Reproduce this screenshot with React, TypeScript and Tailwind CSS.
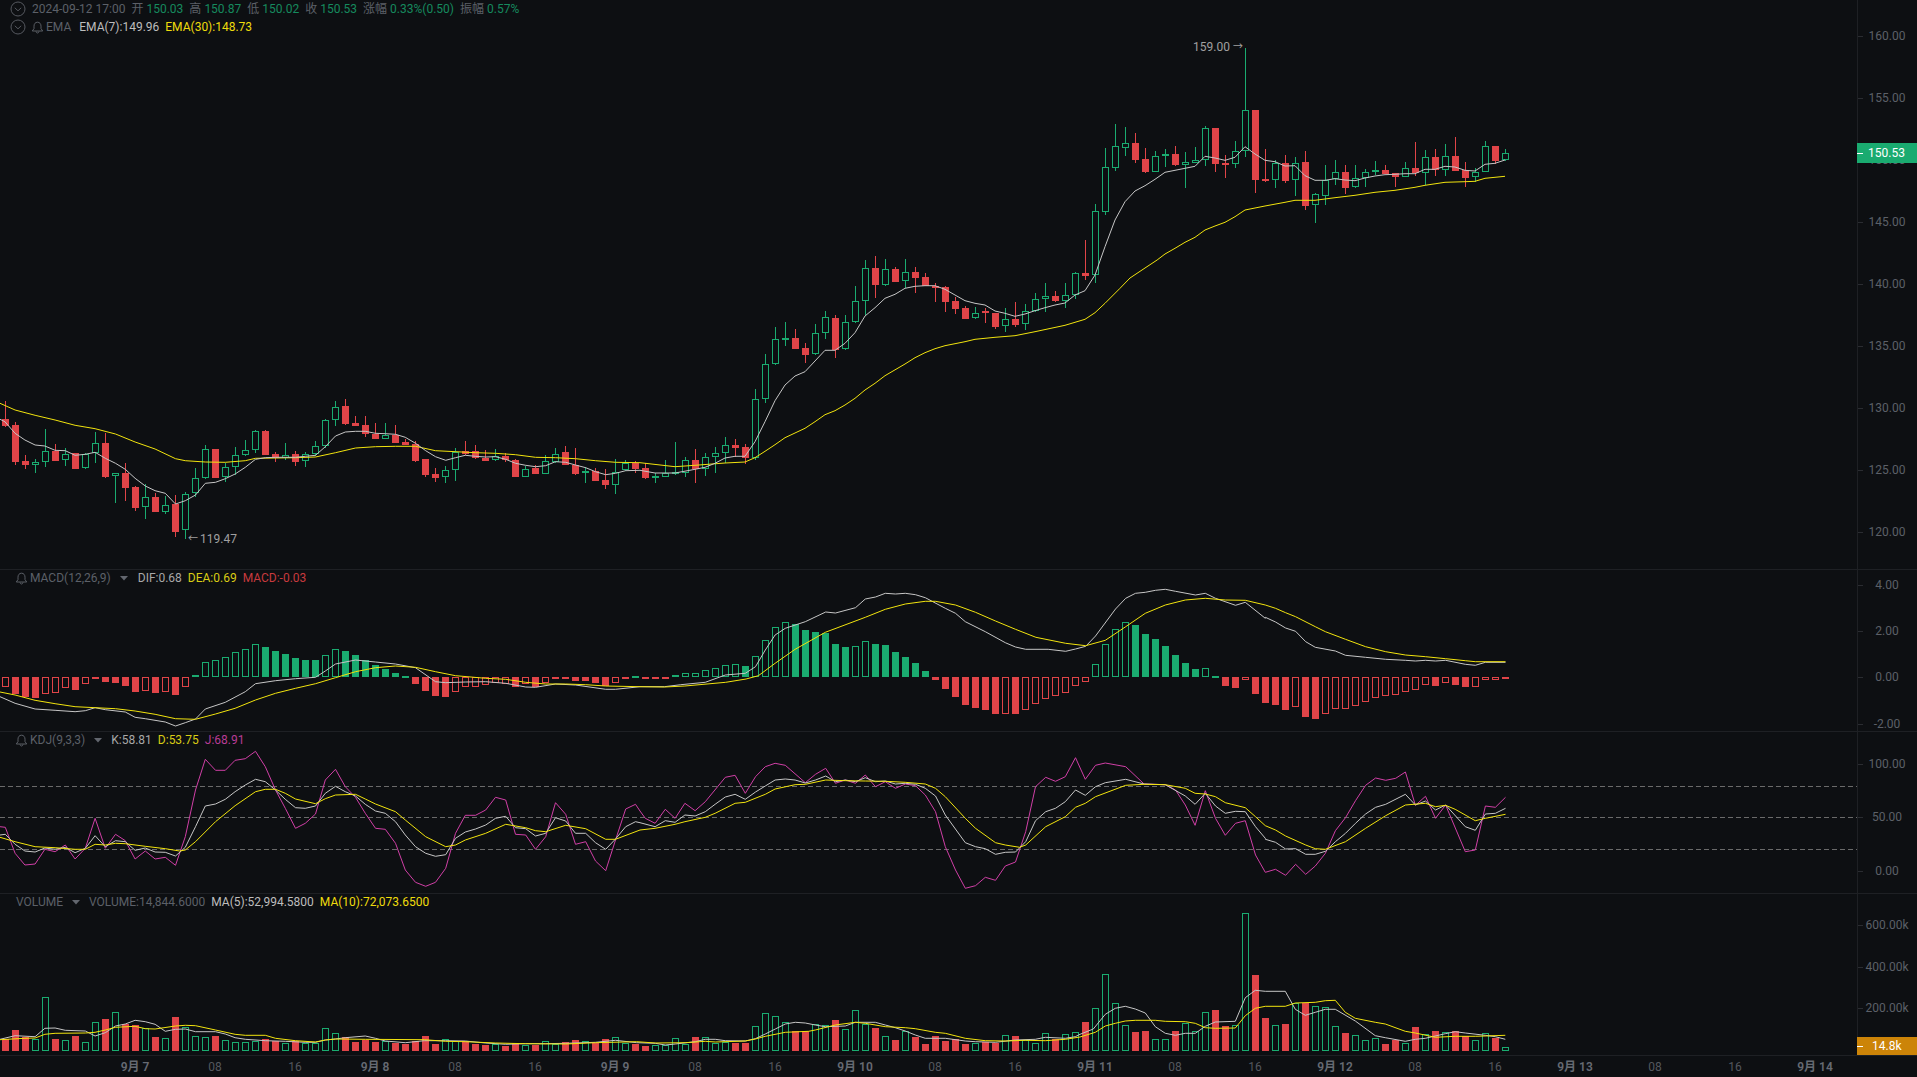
import React from "react";

const BG = "#0d0f12";
const GREEN = "#1aab70";
const RED = "#e04448";
const WHITE = "#c6c6c6";
const YELLOW = "#f2e40e";
const PINK = "#d03fa6";

type Pt = [number, number];
const L = (x0: number, sx: number, y0: number, a: number[]): Pt[] => {
  const r: Pt[] = [];
  for (let i = 0; i < a.length; i += 2) r.push([x0 + a[i] / sx, y0 + a[i + 1] / 3]);
  return r;
};
const join = (...segs: Pt[][]) => {
  const out: Pt[] = [];
  for (const s of segs) for (const p of s) if (!out.length || p[0] > out[out.length - 1][0]) out.push(p);
  return out.map((p) => `${p[0].toFixed(1)},${p[1].toFixed(1)}`).join(" ");
};

// [wickTop, bodyTop, bodyBottom, wickBottom, isGreen]
const c1 = [
  62,118,137,142,0, 125,135,245,255,0, 225,243,255,268,0, 238,247,254,278,1, 148,214,247,260,1, 192,212,242,243,0, 205,221,241,258,1, 218,220,266,267,0,
  220,222,265,266,1, 155,190,220,248,1, 160,190,290,293,0, 280,280,289,368,1, 250,279,323,362,0, 318,321,383,393,0, 312,352,382,418,1, 338,352,395,395,0,
  348,374,395,402,1, 345,372,455,470,0, 335,341,450,478,1, 265,295,340,350,1, 196,208,295,296,1, 207,208,293,293,0, 250,262,292,307,1, 200,224,262,285,1,
  181,211,224,228,1, 150,154,211,218,1, 150,154,224,225,0, 215,223,235,246,0, 190,224,233,240,1, 213,223,245,257,0, 215,221,244,260,1, 182,199,221,228,1,
  118,121,199,203,1, 64,80,121,138,1, 58,79,131,134,0, 107,129,137,138,0, 108,135,161,172,0, 128,161,176,177,0, 130,164,176,177,1, 136,164,189,190,0,
  178,186,194,196,0, 183,193,243,245,0, 236,237,285,290,0, 264,282,294,306,0, 257,271,292,308,1, 203,215,271,303,1, 183,212,222,225,0, 195,213,235,236,0,
  210,235,242,243,0, 208,229,241,243,1, 218,228,241,247,0, 238,241,290,290,0, 258,266,290,290,1, 256,265,281,281,0, 225,244,281,283,1, 205,221,246,248,1,
  198,217,254,255,0, 205,254,281,285,0, 262,272,280,308,1, 265,272,302,303,0, 268,301,316,326,0, 237,275,316,343,1, 240,248,271,272,1, 243,250,266,280,0,
];
const c2 = [
  668,685,713,718,0, 698,708,712,730,1, 660,700,711,712,1, 605,697,700,705,1, 652,661,700,712,1, 628,660,688,728,0, 640,652,688,708,1, 622,640,652,700,1,
  592,616,640,670,1, 598,615,623,650,0, 612,621,653,672,0, 447,478,655,660,1, 343,373,478,490,1, 262,298,373,375,1, 245,294,298,318,1, 267,294,326,328,0,
  310,324,344,368,0, 252,280,343,345,1, 212,232,280,298,1, 225,234,330,355,0, 225,247,328,330,1, 138,183,247,250,1, 60,85,184,225,1, 48,84,134,175,0,
  58,88,134,138,1, 82,87,125,126,0, 57,97,124,145,1, 80,96,113,160,0, 100,111,137,138,0, 128,137,143,185,0, 138,141,185,215,0, 172,183,206,222,0,
  198,204,236,238,0, 202,218,235,236,1, 205,213,218,248,0, 218,219,260,267,0, 205,238,259,277,1, 186,237,254,262,0, 193,212,253,270,1, 160,178,212,215,1,
  128,169,178,216,1, 152,169,182,186,0, 128,166,182,203,1, 97,100,166,178,1, 0,99,107,120,0, -108,-87,106,130,1,
];
const c3 = [
  385,442,575,586,1, 312,379,443,453,1, 322,370,383,408,1, 340,369,419,428,0, 385,417,455,458,0, 393,409,455,455,1, 388,402,407,440,1, 378,402,435,438,0,
  396,427,434,503,1, 380,421,428,430,1, 317,325,421,437,1, 325,324,431,455,0, 405,429,434,473,0, 362,394,433,445,1, 85,271,394,410,1, 270,270,480,518,0,
  387,477,483,487,0, 420,430,481,505,1, 405,429,483,490,0, 410,430,479,527,1, 393,426,557,571,0, 518,523,556,608,1, 436,479,527,555,1, 421,457,478,495,1,
  436,456,503,522,0, 435,475,502,505,1, 447,457,475,500,1, 423,451,457,465,1, 436,450,461,462,0, 458,460,470,500,0, 426,445,470,472,1, 367,444,459,467,0,
  390,412,460,495,1, 387,411,450,467,0, 373,408,449,467,1, 352,408,452,453,0, 427,450,473,500,0, 443,455,472,487,1, 364,379,455,455,1, 378,378,423,432,0,
  388,400,421,422,1,
];
type Candle = { wt: number; bt: number; bb: number; wb: number; g: boolean };
const candles: Candle[] = [];
const pushC = (a: number[], y0: number) => {
  for (let i = 0; i < a.length; i += 5)
    candles.push({ wt: Math.round(y0 + a[i] / 3), bt: Math.round(y0 + a[i + 1] / 3), bb: Math.round(y0 + a[i + 2] / 3), wb: Math.round(y0 + a[i + 3] / 3), g: a[i + 4] === 1 });
};
pushC(c1, 380);
pushC(c2, 240);
pushC(c3, 20);

const ema7 = join(
  L(0, 2.45, 380, [0,118,12,125,37,160,61,180,86,195,110,198,135,211,160,212,184,226,209,223,233,217,258,235,283,250,307,268,331,295,356,318,380,332,405,340,430,372,454,362,479,345,503,310,528,307,552,296,576,282,601,262,626,238,650,233,675,232,699,232,724,232,748,229,773,226,797,200,822,168,846,156,871,154,895,154,920,160,944,161,969,163,993,172,1018,190,1043,212,1067,230,1092,241,1116,233,1140,226,1165,229,1190,231,1214,230,1239,238,1263,250,1288,256,1312,260,1337,257,1361,245,1386,247,1410,255,1435,263,1459,275,1484,284,1508,280,1533,272,1568,271]),
  L(640, 3, 240, [0,690,45,699,105,699,165,688,195,682,225,670,255,654,285,649,315,649,345,605,375,545,405,482,435,435,465,408,495,395,525,363,555,331,585,331,615,310,645,278,675,228,705,203,735,175,765,163,795,145,825,139,855,137,885,137,915,148,945,165,975,182,1005,190,1035,195,1065,213,1095,220,1125,229,1155,222,1185,212,1215,203,1245,195,1275,189,1305,165,1335,152,1365,105]),
  L(1000, 2.8, 20, [294,680,322,600,350,545,378,513,406,497,434,478,462,457,490,451,518,445,546,439,574,409,602,414,630,421,658,412,686,380,714,402,742,421,770,425,798,438,826,437,854,467,882,481,910,481,938,476,966,480,994,482,1022,474,1050,468,1078,464,1106,463,1134,461,1162,461,1190,448,1218,448,1246,439,1274,441,1302,451,1330,453,1358,433,1386,430,1414,420])
);
const ema30 = join(
  L(0, 2.45, 380, [0,70,37,90,86,106,135,120,184,136,233,146,283,162,331,186,380,207,430,236,454,242,503,246,552,247,601,242,626,235,675,234,724,233,773,231,822,218,871,204,920,200,969,199,1018,199,1067,212,1116,215,1165,218,1214,220,1263,224,1312,232,1361,233,1410,236,1459,242,1508,247,1568,248]),
  L(640, 3, 240, [0,672,105,680,165,676,255,669,315,666,345,653,375,634,405,614,435,593,495,565,525,545,555,524,585,512,615,495,645,475,675,450,705,430,735,407,795,372,825,353,855,338,885,326,915,317,975,305,1005,298,1065,292,1125,287,1185,275,1275,256,1335,238,1365,218,1395,190,1440,145,1470,114,1515,84]),
  L(1000, 2.8, 20, [440,720,462,702,490,685,518,667,546,652,574,630,602,618,630,607,658,590,686,570,742,558,798,547,826,541,882,541,938,533,994,526,1050,517,1106,511,1162,502,1190,496,1246,487,1302,485,1330,484,1358,475,1414,469])
);

// negative = hollow bar
const hist = [
  -380,403,412,414,-403,-398,-385,390,-373,356,366,369,377,396,-392,399,-396,404,-380,346,-306,-300,-292,-277,-267,-253,261,273,282,294,300,300,-286,-268,273,285,300,315,326,339,347,372,393,408,411,-395,-382,-380,-376,-370,-372,380,-373,382,-370,356,356,362,362,370,378,-368,355,347,
  355,355,355,346,-340,-340,-331,-325,-316,-313,318,-287,-241,-202,-187,192,210,216,219,252,261,-259,-244,252,255,276,291,309,333,360,387,411,435,444,450,462,-461,462,-449,-431,-416,-407,-398,-377,-365,-313,-253,-208,-187,195,222,237,258,285,309,327,-325,348,378,384,-361,402,429,
  435,450,-442,470,477,-463,-448,-448,-437,-425,-413,-407,-404,-395,-391,-376,377,-368,375,381,-380,-361,-361,356,
];
const dif = join(
  L(0, 2.45, 560, [0,410,37,430,86,447,135,451,184,455,209,452,233,443,258,449,307,456,331,472,356,476,405,486,430,498,454,488,479,477,503,447,552,427,601,395,626,371,675,362,724,356,773,352,797,333,822,312,871,300,920,306,969,312,1018,323,1067,365,1092,368,1140,366,1190,365,1239,370,1288,381,1312,382,1361,372,1410,375,1484,388,1508,388,1568,380]),
  L(640, 2.45, 560, [0,380,60,380,100,374,160,367,209,345,258,340,283,320,307,270,331,225,356,205,405,185,455,156,479,159,528,143,552,117,577,111,601,100,626,102,650,100,675,104,699,113,748,145,773,160,797,185,846,215,895,248,920,261,945,268,1000,268,1043,274,1067,267,1092,259,1116,228,1165,147,1190,115,1214,100,1238,97,1263,91,1287,88,1312,94,1361,105,1385,100,1410,115,1459,136,1483,127,1532,175]),
  L(1260, 2.387, 560, [0,162,13,172,37,186,61,204,85,214,109,245,132,262,180,273,204,286,252,292,300,298,347,301,371,303,395,301,419,303,443,301,490,313,514,316,538,307,586,307])
);
const dea = join(
  L(0, 2.45, 560, [0,396,37,405,86,421,135,431,184,440,233,443,283,446,331,453,380,463,430,476,479,478,528,462,576,445,626,420,675,400,724,385,773,371,822,353,871,335,920,323,969,318,1018,322,1067,335,1116,347,1190,355,1239,358,1288,367,1337,372,1386,372,1435,374,1484,378,1568,380]),
  L(640, 2.45, 560, [0,381,60,381,110,378,210,367,260,357,290,347,331,310,380,268,454,217,552,172,601,148,650,132,699,124,724,124,773,135,822,157,871,183,920,208,970,232,1043,250,1092,257,1140,241,1190,200,1238,160,1287,135,1336,120,1385,115,1434,120,1483,121,1532,135]),
  L(1260, 2.387, 560, [0,130,37,145,61,158,85,170,132,200,156,215,204,238,252,260,300,275,347,285,395,290,443,296,490,302,514,305,586,305])
);
const kK = join(
  L(0, 2.45, 560, [0,825,13,823,37,853,61,873,86,876,110,864,135,868,160,862,184,878,209,865,233,827,258,860,283,842,307,845,331,871,356,864,380,876,405,877,430,888,454,862,479,800,503,738,528,732,552,718,576,695,601,675,626,658,650,665,675,690,699,718,724,743,748,745,773,738,797,700,822,679,846,695,871,708,895,733,920,753,944,760,969,785,993,825,1018,860,1043,880,1067,889,1092,884,1116,835,1140,816,1165,807,1190,795,1214,775,1239,769,1263,803,1288,806,1312,828,1337,820,1361,773,1386,783,1410,820,1435,820,1459,848,1484,868,1508,837,1533,800,1557,785]),
  L(640, 2.45, 560, [0,788,37,800,62,782,86,787,110,765,135,768,160,755,184,733,209,711,233,703,258,718,283,696,307,678,331,660,356,657,380,660,405,669,430,660,455,648,479,665,503,660,528,665,552,653,577,665,601,663,626,672,650,670,675,673,699,685,724,708,748,765,797,848,822,860,846,866,871,883,895,877,920,876,945,845,969,782,994,755,1018,745,1042,725,1067,690,1091,706,1116,680,1140,668,1190,658,1235,672,1287,674,1336,708,1360,733,1385,700,1410,738,1434,760,1459,754,1483,755,1508,800,1532,835]),
  L(1260, 2.387, 560, [0,820,13,838,37,847,61,867,85,866,109,883,132,883,156,874,180,845,204,820,228,790,252,762,276,742,300,733,347,703,371,735,395,723,419,750,443,735,490,800,514,811,538,762,562,760,586,745])
);
const kD = join(
  L(0, 2.45, 560, [0,832,37,845,86,860,135,863,184,868,209,868,233,853,258,855,283,850,307,851,356,859,405,866,440,873,454,870,479,845,528,785,576,737,626,695,650,688,675,688,699,700,724,717,773,731,797,716,822,705,871,703,895,717,920,732,969,755,993,780,1043,830,1092,860,1116,855,1140,840,1190,820,1239,793,1288,803,1312,812,1337,815,1386,796,1435,806,1484,838,1508,838]),
  L(640, 2.45, 560, [0,810,37,805,86,793,110,785,160,772,184,760,233,730,258,727,307,703,331,687,380,674,405,673,455,660,503,662,552,663,601,664,650,667,699,672,724,685,748,710,797,775,822,805,871,848,895,855,930,862,945,855,994,800,1042,770,1067,742,1091,730,1116,710,1190,676,1235,673,1287,674,1336,685,1360,700,1385,702,1410,710,1434,728,1483,743,1508,770,1532,797]),
  L(1260, 2.387, 560, [0,773,37,810,61,828,109,855,132,866,156,868,204,845,252,805,300,767,347,735,395,730,419,740,443,736,466,748,514,782,538,775,586,763])
);
const kJ = join(
  L(0, 2.45, 560, [0,800,13,802,37,880,61,915,86,912,110,868,135,875,160,855,184,897,209,865,233,775,258,865,283,823,307,842,331,897,356,873,380,897,405,892,430,916,454,830,479,690,503,598,528,631,552,631,576,601,601,596,626,574,650,620,675,690,699,745,724,805,748,790,773,762,797,660,822,628,846,680,871,712,895,760,920,805,944,808,969,850,993,930,1018,967,1043,979,1067,967,1092,925,1116,820,1140,766,1165,766,1190,750,1214,712,1239,720,1263,823,1288,825,1312,868,1337,830,1361,728,1386,763,1410,853,1435,845,1459,903,1484,932,1508,840,1533,747,1557,733]),
  L(640, 2.45, 560, [0,753,13,775,37,790,62,748,86,775,110,730,135,752,160,725,209,652,233,646,258,700,283,650,307,620,331,610,356,616,405,668,430,643,455,625,479,670,503,660,528,670,552,645,577,680,601,665,626,685,650,672,675,677,699,705,724,755,748,860,773,930,797,985,822,977,846,952,871,961,895,918,920,906,945,815,969,680,994,652,1018,664,1042,650,1067,593,1091,658,1116,616,1140,609,1190,620,1235,672,1287,674,1312,690,1336,735,1360,796,1385,692,1410,775,1434,826,1459,790,1483,782,1508,885,1532,937]),
  L(1260, 2.387, 560, [0,908,13,937,37,928,61,946,85,913,109,943,132,918,156,880,180,812,204,773,228,722,252,676,276,654,300,661,324,655,347,636,371,736,395,709,419,775,443,735,490,875,514,870,538,738,562,742,586,712])
);

// volume bar tops, page y
const v1 = [478,450,472,477,352,477,481,468,487,427,417,397,432,436,443,471,475,411,440,469,472,468,481,487,486,482,478,484,488,484,490,490,445,460,472,486,479,486,484,489,491,484,468,492,478,484,484,491,495,492,497,490,495,495,484,492,487,480,484,489,477,472,490];
const v2 = [252,258,256,254,233,251,232,230,248,245,249,249,199,160,169,187,214,213,193,196,180,208,151,192,204,229,240,213,231,252,228,243,238,252,250,247,249,226,228,241,250,220,236,223,217];
const v3 = [351,310,208,295,361,381,378,403,403,378,355,379,322,315,363,361,25,210,339,361,357,295,293,304,307,364,384,391,406,400,417,404,415,366,388,378,382,378,394,406,385,398,427];
const vol = [...v1.map((y) => 880 + y / 3), ...v2.map((y) => 960 + y / 3), ...v3.map((y) => 905 + y / 3)].map(Math.round);

const ma5 = join(
  L(0, 2.45, 880, [0,478,37,467,86,470,110,445,135,444,160,451,209,453,233,468,258,458,283,438,307,432,331,421,356,425,380,433,405,454,430,448,454,447,479,455,528,455,552,462,576,473,601,478,650,482,699,484,748,487,773,487,797,480,822,477,846,473,895,468,920,475,944,483,993,488,1040,482,1092,482,1140,483,1190,489,1239,493,1288,491,1337,491,1386,490,1459,487,1508,481,1560,488]),
  L(630, 3, 960, [76,250,106,255,136,252,196,245,226,238,256,238,286,242,346,243,376,236,406,222,436,207,466,192,496,187,526,189,556,195,586,200,646,198,676,187,736,187,766,195,796,203,826,213,856,225,886,235,946,235,1006,243,1036,245,1096,247,1156,240,1216,238,1246,232,1306,235,1336,230]),
  L(1080, 3, 905, [0,388,40,372,76,328,106,310,136,304,166,312,196,324,226,365,256,385,286,391,316,385,346,385,376,364,406,351,466,349,496,278,526,256,556,259,616,259,646,313,676,331,706,322,736,313,766,313,826,348,886,392,916,398,976,409,1006,403,1036,400,1096,386,1126,380,1156,384,1216,391,1246,395,1276,403])
);
const ma10 = join(
  L(0, 2.45, 880, [0,479,61,475,86,474,110,463,135,460,209,459,233,457,258,450,283,442,331,439,356,446,380,447,430,438,454,436,479,437,528,450,576,463,601,466,650,466,675,475,724,482,773,486,797,480,822,477,895,478,1040,479,1092,484,1140,485,1214,489,1288,491,1386,492,1459,488,1560,485]),
  L(630, 3, 960, [76,249,166,248,226,244,256,246,346,243,376,237,406,229,466,217,536,214,556,210,616,195,676,187,706,190,766,200,826,203,856,206,916,217,946,220,1006,235,1066,242,1126,243,1186,241,1246,242,1306,238]),
  L(1080, 3, 905, [0,396,46,382,76,363,106,355,136,348,166,346,226,346,256,349,316,350,346,355,376,368,406,370,466,369,496,332,526,310,556,304,616,304,646,294,706,292,736,287,766,286,796,322,826,340,886,352,916,357,976,379,1006,384,1066,397,1126,394,1186,394,1276,391])
);

function Bar({ n, top, bottom, green, hollow }: { n: number; top: number; bottom: number; green: boolean; hollow: boolean }) {
  const color = green ? GREEN : RED;
  const h = Math.max(2, bottom - top);
  return hollow ? (
    <rect x={2.5 + 10 * n} y={top + 0.5} width={6} height={h - 1} fill={BG} stroke={color} strokeWidth={1} shapeRendering="crispEdges" />
  ) : (
    <rect x={2 + 10 * n} y={top} width={7} height={h} fill={color} shapeRendering="crispEdges" />
  );
}

function Line({ points, color }: { points: string; color: string }) {
  return <polyline points={points} fill="none" stroke={color} strokeWidth={1} strokeLinejoin="round" />;
}

function Bell() {
  return (
    <svg width="13" height="13" viewBox="0 0 13 13" fill="none" stroke="#62666e" strokeWidth="0.9" className="shrink-0">
      <path d="M6.5 1.2C4.2 1.2 3 3 3 5.2V7.6L1.3 10H11.7L10 7.6V5.2C10 3 8.8 1.2 6.5 1.2Z" />
      <path d="M5 10.4C5.2 11.5 5.8 12 6.5 12C7.2 12 7.8 11.5 8 10.4" />
    </svg>
  );
}
function Toggle() {
  return (
    <svg width="16" height="16" viewBox="0 0 16 16" fill="none" stroke="#55585f" strokeWidth="1" className="shrink-0">
      <circle cx="8" cy="8" r="7" />
      <path d="M4.8 6.8L8 9.8L11.2 6.8" />
    </svg>
  );
}
function Caret() {
  return (
    <svg width="8" height="5" viewBox="0 0 8 5" fill="#62666e" className="shrink-0">
      <path d="M0 0H8L4 4.5Z" />
    </svg>
  );
}

function Axis({ top, height, ticks }: { top: number; height: number; ticks: { y: number; label: string }[] }) {
  return (
    <svg width="59" height={height} viewBox={`1858 ${top} 59 ${height}`} className="block shrink-0 text-[12px]">
      {ticks.map((t) => (
        <g key={t.label}>
          <rect x={1858} y={Math.round(t.y)} width={5} height={1} fill="#2a2c31" />
          <text x={1887} y={t.y + 3.5} textAnchor="middle" fill="#5c6068">
            {t.label}
          </text>
        </g>
      ))}
    </svg>
  );
}

function Pane({ top, h, ticks, children, legend, axisOver }: { top: number; h: number; ticks: { y: number; label: string }[]; children: React.ReactNode; legend: React.ReactNode; axisOver?: React.ReactNode }) {
  return (
    <div className="flex shrink-0 border-b border-[#1e2024]" style={{ height: h + 1 }}>
      <div className="relative w-[1857px] shrink-0">
        <svg width="1857" height={h} viewBox={`0 ${top} 1857 ${h}`} className="block">
          {children}
        </svg>
        {legend}
      </div>
      <div className="relative w-[60px] shrink-0 border-l border-[#1e2024]">
        <Axis top={top} height={h} ticks={ticks} />
        {axisOver}
      </div>
    </div>
  );
}

const xLabels = ["9月 7","08","16","9月 8","08","16","9月 9","08","16","9月 10","08","16","9月 11","08","16","9月 12","08","16","9月 13","08","16","9月 14"];

export default function App() {
  return (
    <div className="flex h-[1077px] w-[1917px] flex-col overflow-hidden bg-[#0d0f12] font-[Roboto,'Noto_Sans_CJK_SC',sans-serif] text-[12px] leading-none">
      {/* price */}
      <Pane
        top={0}
        h={569}
        ticks={[160,155,150,145,140,135,130,125,120].map((p) => ({ y: 36.3 + (160 - p) * 12.4, label: p.toFixed(2) }))}
        axisOver={
          <div className="absolute left-[-1px] top-[143px] flex h-5 w-[60px] items-center bg-[#1aab70] text-white">
            <span className="h-px w-[6px] bg-white" />
            <span className="ml-[5px]">150.53</span>
          </div>
        }
        legend={
          <>
            <div className="absolute left-[10px] top-[1px] flex flex-col gap-[2px]">
              <div className="flex h-4 items-center">
                <Toggle />
                <span className="ml-[6px] text-[#5c6068]">2024-09-12 17:00</span>
                {[["开","150.03"],["高","150.87"],["低","150.02"],["收","150.53"],["涨幅","0.33%(0.50)"],["振幅","0.57%"]].map(([k, v]) => (
                  <span key={k} className="ml-[6px] flex items-center gap-[3px]">
                    <span className="text-[#5c6068]">{k}</span>
                    <span className="text-[#168a5e]">{v}</span>
                  </span>
                ))}
              </div>
              <div className="flex h-4 items-center">
                <Toggle />
                <span className="ml-[5px] flex items-center gap-[2px]">
                  <Bell />
                  <span className="text-[#5c6068]">EMA</span>
                </span>
                <span className="ml-[8px] text-[#bdbdbd]">EMA(7):149.96</span>
                <span className="ml-[6px] text-[#efdc0c]">EMA(30):148.73</span>
              </div>
            </div>
            <div className="absolute left-[188px] top-[533px] flex items-center gap-[2px] text-[#a0a0a0]">
              <span className="text-[10px]">←</span>
              <span>119.47</span>
            </div>
            <div className="absolute left-[1193px] top-[41px] flex items-center gap-[3px] text-[#a0a0a0]">
              <span>159.00</span>
              <span className="text-[10px]">→</span>
            </div>
          </>
        }
      >
        <g>
          {candles.map((c, i) => {
            const color = c.g ? GREEN : RED;
            return (
              <g key={i}>
                <rect x={5 + 10 * i} y={c.wt} width={1} height={Math.max(1, c.wb - c.wt)} fill={color} shapeRendering="crispEdges" />
                <Bar n={i} top={c.bt} bottom={c.bb} green={c.g} hollow={c.g} />
              </g>
            );
          })}
        </g>
        <Line points={ema30} color={YELLOW} />
        <Line points={ema7} color={WHITE} />
      </Pane>

      {/* MACD */}
      <Pane
        top={570}
        h={161}
        ticks={[{ y: 585, label: "4.00" }, { y: 631, label: "2.00" }, { y: 677, label: "0.00" }, { y: 724, label: "-2.00" }]}
        legend={
          <div className="absolute left-[15px] top-0 flex h-4 items-center">
            <Bell />
            <span className="ml-[2px] text-[#5c6068]">MACD(12,26,9)</span>
            <span className="ml-[9px]"><Caret /></span>
            <span className="ml-[10px] text-[#a8a8a8]">DIF:0.68</span>
            <span className="ml-[6px] text-[#d9cc14]">DEA:0.69</span>
            <span className="ml-[6px] text-[#c83a3e]">MACD:-0.03</span>
          </div>
        }
      >
        {hist.map((v, i) => {
          const y = 560 + Math.abs(v) / 3;
          const base = 677;
          const top = Math.round(Math.min(y, base));
          const bottom = Math.round(Math.max(y, base));
          return <Bar key={i} n={i} top={top} bottom={bottom} green={Math.abs(v) < 350} hollow={v < 0} />;
        })}
        <Line points={dif} color={WHITE} />
        <Line points={dea} color={YELLOW} />
      </Pane>

      {/* KDJ */}
      <Pane
        top={732}
        h={161}
        ticks={[{ y: 764, label: "100.00" }, { y: 817, label: "50.00" }, { y: 871, label: "0.00" }]}
        legend={
          <div className="absolute left-[15px] top-0 flex h-4 items-center">
            <Bell />
            <span className="ml-[2px] text-[#5c6068]">KDJ(9,3,3)</span>
            <span className="ml-[9px]"><Caret /></span>
            <span className="ml-[9px] text-[#a8a8a8]">K:58.81</span>
            <span className="ml-[6px] text-[#d9cc14]">D:53.75</span>
            <span className="ml-[6px] text-[#b83c95]">J:68.91</span>
          </div>
        }
      >
        {[786.5, 817.5, 849.5].map((y) => (
          <line key={y} x1={0} x2={1857} y1={y} y2={y} stroke="#6a6a6a" strokeWidth={1} strokeDasharray="5 3" />
        ))}
        <Line points={kJ} color={PINK} />
        <Line points={kK} color={WHITE} />
        <Line points={kD} color={YELLOW} />
      </Pane>

      {/* Volume */}
      <Pane
        top={894}
        h={161}
        ticks={[{ y: 925, label: "600.00k" }, { y: 967, label: "400.00k" }, { y: 1008, label: "200.00k" }]}
        axisOver={
          <div className="absolute left-[-1px] top-[143px] flex h-[18px] w-[60px] items-center bg-[#cc8408] text-white">
            <span className="h-px w-[6px] bg-white" />
            <span className="ml-[9px]">14.8k</span>
          </div>
        }
        legend={
          <div className="absolute left-[16px] top-0 flex h-4 items-center">
            <span className="text-[#5c6068]">VOLUME</span>
            <span className="ml-[9px]"><Caret /></span>
            <span className="ml-[9px] text-[#5c6068]">VOLUME:14,844.6000</span>
            <span className="ml-[6px] text-[#bdbdbd]">MA(5):52,994.5800</span>
            <span className="ml-[6px] text-[#efdc0c]">MA(10):72,073.6500</span>
          </div>
        }
      >
        {vol.map((y, i) => (
          <Bar key={i} n={i} top={y} bottom={1051} green={candles[i].g} hollow={candles[i].g} />
        ))}
        <Line points={ma5} color={WHITE} />
        <Line points={ma10} color={YELLOW} />
      </Pane>

      {/* time axis */}
      <div className="flex h-[21px] items-center pl-[95px]">
        {xLabels.map((t, i) => (
          <span key={i} className={t.includes("月") ? "w-20 shrink-0 text-center font-semibold text-[#666a72]" : "w-20 shrink-0 text-center text-[#54575e]"}>
            {t}
          </span>
        ))}
      </div>
    </div>
  );
}
